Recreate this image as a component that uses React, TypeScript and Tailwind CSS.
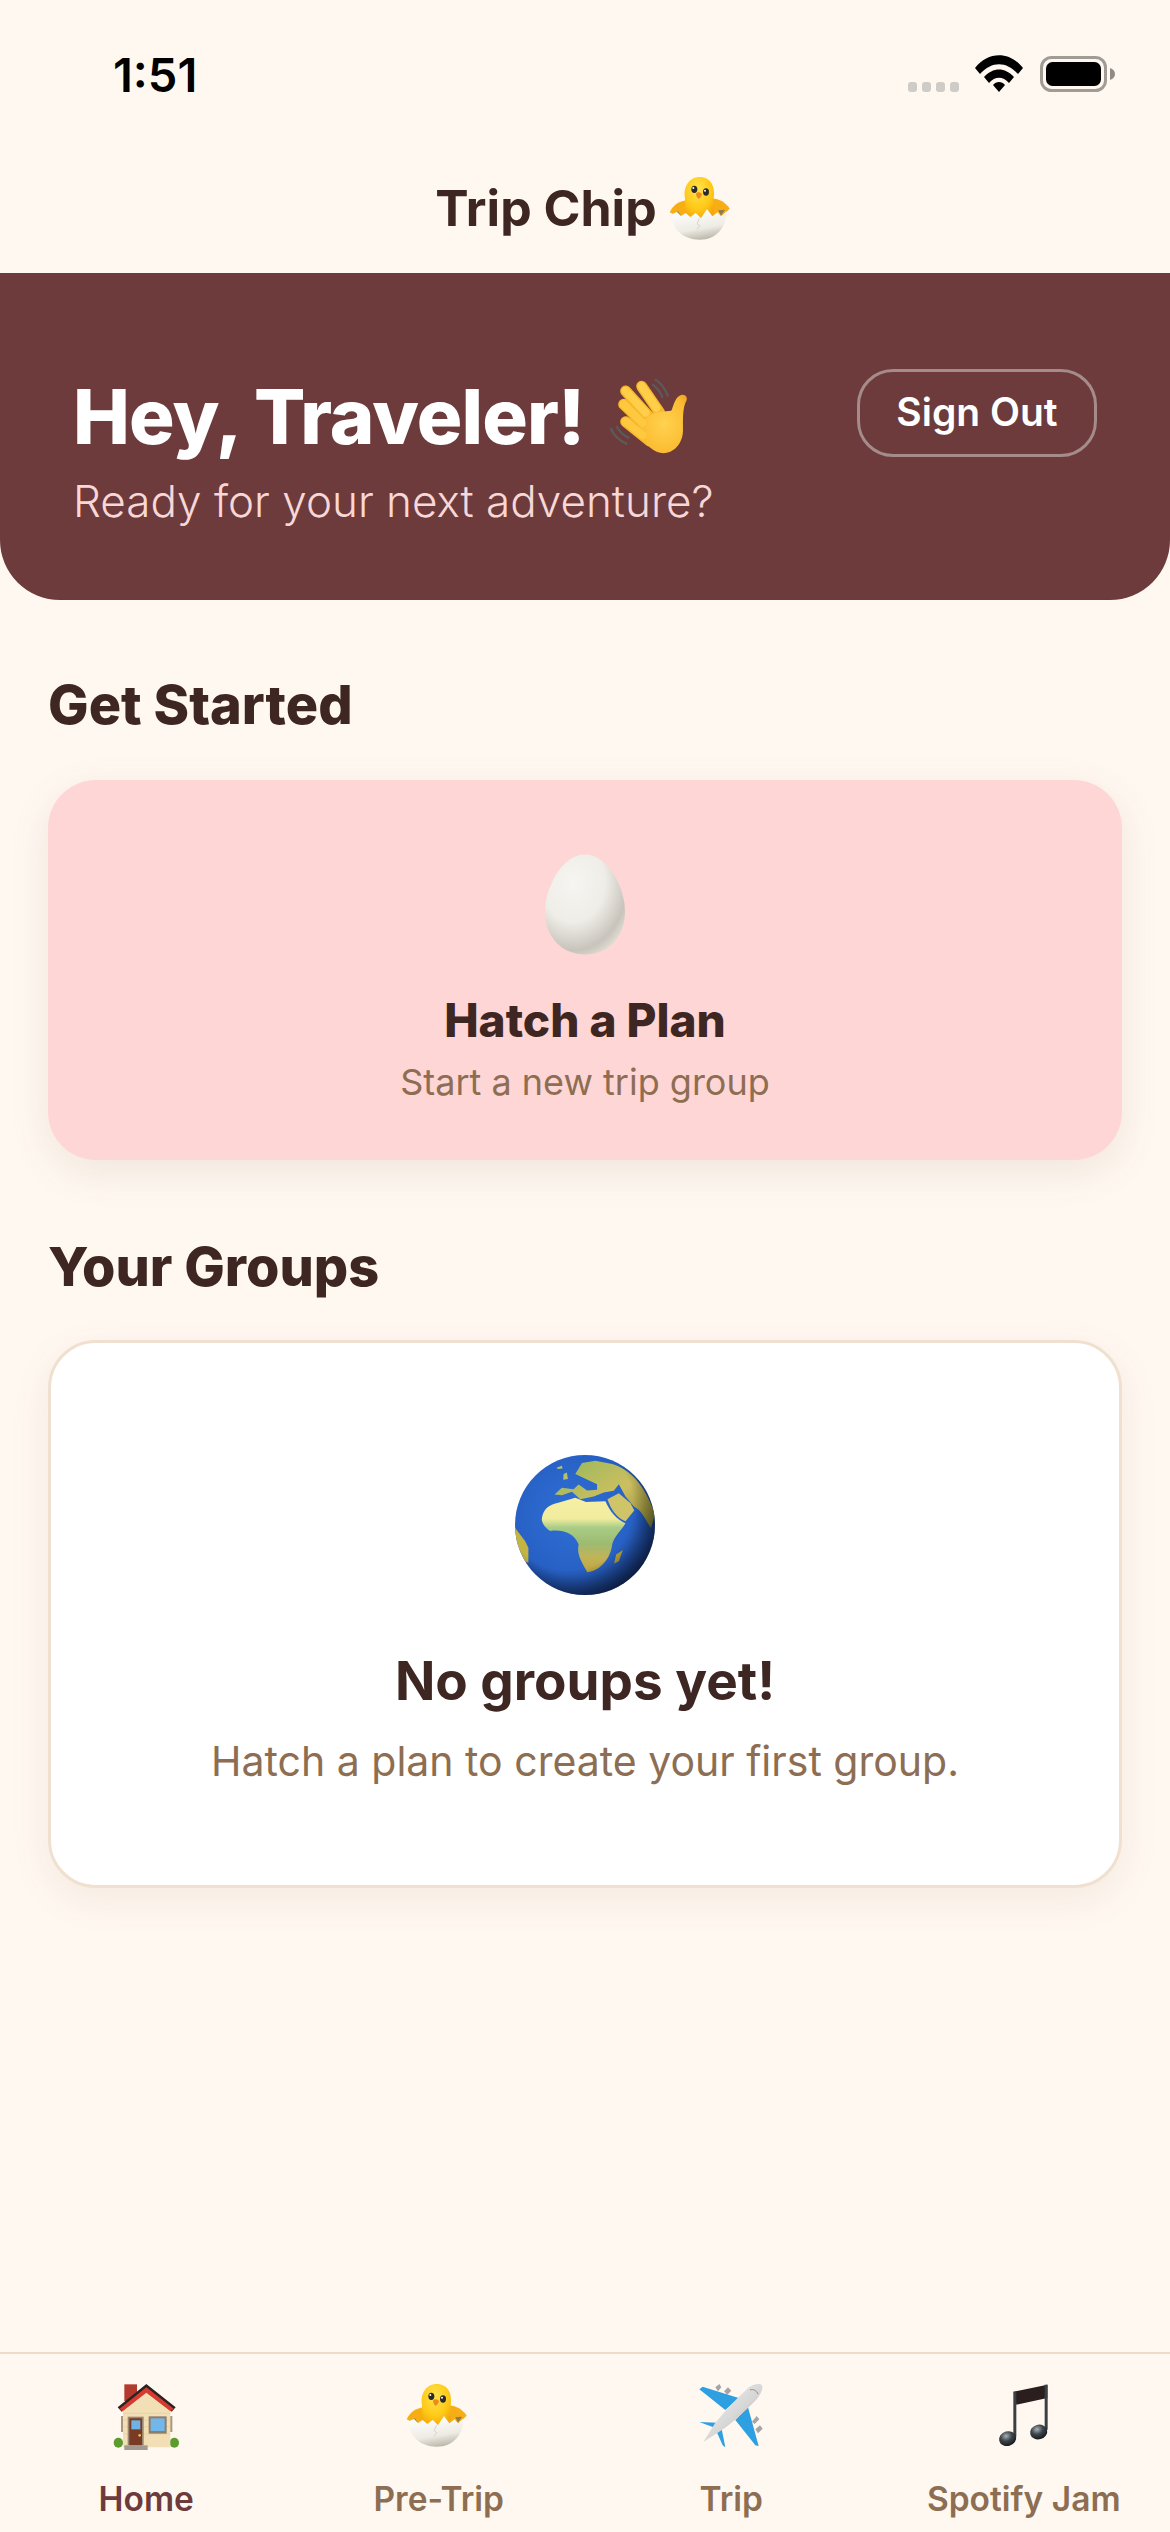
function Wifi() {
  return (
    <svg width="48" height="37" viewBox="0 0 48 37">
      <path d="M0 13 C13 -4 35 -4 48 13 L43 19 C31 6 17 6 5 19 Z" fill="#000" />
      <path d="M9 22 C18 12 30 12 39 22 L34 28 C28 21 20 21 14 28 Z" fill="#000" />
      <path d="M18 30 C21 26 27 26 30 30 L24 37 Z" fill="#000" />
    </svg>
  );
}

function Battery() {
  return (
    <svg width="75" height="36" viewBox="0 0 75 36">
      <rect x="1.5" y="1.5" width="64" height="33" rx="10" fill="none" stroke="#A09B95" strokeWidth="3" />
      <rect x="6" y="6" width="55" height="24" rx="6.5" fill="#000" />
      <path d="M70 12 C73 13 75 15 75 18 C75 21 73 23 70 24 Z" fill="#8F8A85" />
    </svg>
  );
}

function Chick() {
  return (
    <svg width="90" height="80" viewBox="0 0 270 240">
      <defs>
        <radialGradient id="chickBody" cx="45%" cy="30%" r="70%">
          <stop offset="0%" stopColor="#FFE34D" />
          <stop offset="65%" stopColor="#FFC917" />
          <stop offset="100%" stopColor="#F4A80C" />
        </radialGradient>
        <linearGradient id="chickShell" x1="0.3" y1="0" x2="0.6" y2="1">
          <stop offset="0%" stopColor="#FFFFFF" />
          <stop offset="65%" stopColor="#EDEBE3" />
          <stop offset="100%" stopColor="#B9B6A8" />
        </linearGradient>
      </defs>
      <path d="M38 148 C48 126 66 114 90 112 L95 165 L60 160 Z" fill="#F7AE14" />
      <path d="M218 137 C205 118 188 108 165 106 L165 165 L195 160 Z" fill="#F7AE14" />
      <path d="M128 42 C162 42 176 72 170 108 C172 130 172 150 170 170 L86 170 C82 140 84 120 84 105 C78 72 96 42 128 42 Z" fill="url(#chickBody)" />
      <ellipse cx="112" cy="79" rx="9" ry="11" fill="#2B2B2B" />
      <ellipse cx="147" cy="87" rx="9" ry="11" fill="#2B2B2B" />
      <circle cx="109" cy="75" r="3" fill="#fff" />
      <circle cx="144" cy="83" r="3" fill="#fff" />
      <path d="M117 92 C122 85 132 87 135 94 C133 101 129 106 125 108 C121 104 117 99 117 92 Z" fill="#F08A1D" />
      <path d="M62 143 L72 158 L58 160 Z M184 142 L204 140 L192 158 Z" fill="#8F7A55" />
      <path d="M46 153 L60 147 L72 159 L86 150 L100 162 L116 150 L132 165 L150 138 L166 160 L182 148 L192 160 L207 146 C210 190 180 230 128 230 C76 230 42 195 46 153 Z" fill="url(#chickShell)" />
      <path d="M128 165 L120 182 L128 188 L120 200" fill="none" stroke="#C9C6BA" strokeWidth="2" />
    </svg>
  );
}

function Hand() {
  return (
    <svg width="100" height="90" viewBox="0 0 300 270">
      <defs>
        <radialGradient id="handFill" cx="55%" cy="50%" r="70%">
          <stop offset="0%" stopColor="#FFD24F" />
          <stop offset="70%" stopColor="#FBBC32" />
          <stop offset="100%" stopColor="#EE9A1A" />
        </radialGradient>
      </defs>
      <g fill="none" stroke="#5C5A58" strokeWidth="7" strokeLinecap="round">
        <path d="M158 26 C172 36 186 50 194 74" />
        <path d="M150 42 C162 50 172 62 178 78" />
        <path d="M24 174 C32 192 48 208 70 218" />
        <path d="M42 168 C50 182 62 194 76 200" />
      </g>
      <path d="M68 60 L150 150 M116 46 L170 125 M62 100 L135 170 M68 152 L140 210" stroke="#F9B82C" strokeWidth="33" strokeLinecap="round" />
      <path d="M120 150 C150 115 190 125 206 118 C212 100 218 76 236 71 C250 70 254 80 250 90 C238 110 240 150 240 180 C238 225 205 250 175 246 C140 240 120 205 100 185 Z" fill="url(#handFill)" />
      <path d="M68 60 L128 125 M116 46 L160 110" stroke="#FFCF4A" strokeWidth="24" strokeLinecap="round" />
      <path d="M62 100 L118 155 M68 152 L118 192" stroke="#FFC93F" strokeWidth="24" strokeLinecap="round" />
    </svg>
  );
}

function Egg() {
  return (
    <svg width="80" height="101" viewBox="0 0 80 101">
      <defs>
        <radialGradient id="eggFill" cx="35%" cy="28%" r="80%">
          <stop offset="0%" stopColor="#F7F5F1" />
          <stop offset="50%" stopColor="#EFEDE7" />
          <stop offset="85%" stopColor="#C8C4BC" />
          <stop offset="100%" stopColor="#E2DFD6" />
        </radialGradient>
      </defs>
      <path d="M40 0.5 C62 0.5 80 32 80 58 C80 84 62 100.5 40 100.5 C18 100.5 0 84 0 58 C0 32 18 0.5 40 0.5 Z" fill="url(#eggFill)" />
    </svg>
  );
}

function Globe() {
  return (
    <svg width="140" height="140" viewBox="160 108 418 418">
      <defs>
        <radialGradient id="ocean" cx="42%" cy="42%" r="62%">
          <stop offset="0%" stopColor="#2F6FD6" />
          <stop offset="72%" stopColor="#2760C4" />
          <stop offset="100%" stopColor="#1A3F8E" />
        </radialGradient>
        <linearGradient id="africaLand" x1="0" y1="0" x2="0" y2="1">
          <stop offset="0%" stopColor="#F6EFA4" />
          <stop offset="28%" stopColor="#F2EC9E" />
          <stop offset="40%" stopColor="#A8CC86" />
          <stop offset="62%" stopColor="#9DBB70" />
          <stop offset="80%" stopColor="#C2B358" />
          <stop offset="100%" stopColor="#C0A53E" />
        </linearGradient>
        <linearGradient id="asiaLand" x1="0" y1="0" x2="1" y2="1">
          <stop offset="0%" stopColor="#93B85C" />
          <stop offset="55%" stopColor="#CDBF60" />
          <stop offset="100%" stopColor="#8A8530" />
        </linearGradient>
        <radialGradient id="globeShade" cx="38%" cy="36%" r="68%">
          <stop offset="68%" stopColor="#000" stopOpacity="0" />
          <stop offset="100%" stopColor="#000" stopOpacity="0.55" />
        </radialGradient>
        <clipPath id="globeClip">
          <circle cx="369" cy="317" r="209" />
        </clipPath>
      </defs>
      <circle cx="369" cy="317" r="209" fill="url(#ocean)" />
      <g clipPath="url(#globeClip)">
        <path d="M240 298 C244 272 258 256 292 250 L340 236 L372 248 L430 246 C442 275 465 302 490 312 C476 335 456 350 450 376 C446 412 420 452 376 458 C356 424 344 402 350 375 C336 340 300 330 265 335 C250 325 240 312 240 298 Z" fill="url(#africaLand)" />
        <path d="M436 240 L470 222 L505 252 L516 274 L490 306 C462 296 446 268 436 240 Z" fill="#CFC468" />
        <path d="M278 226 L300 206 L335 210 L350 196 L375 214 L405 212 L405 195 L340 165 L360 132 L400 125 L450 135 C500 150 545 190 578 285 L566 326 C548 300 540 275 515 262 L490 232 L470 195 L455 215 L425 220 L395 232 L355 240 L330 218 L300 228 Z" fill="url(#asiaLand)" />
        <path d="M284 146 L300 140 L302 148 L288 150 Z M305 165 L315 160 L318 180 L304 182 Z" fill="#B6C26A" />
        <path d="M160 325 L190 365 L200 385 L200 430 L170 420 L160 380 Z" fill="#C4B446" />
        <path d="M482 392 L470 425 L456 432 L462 405 Z" fill="#B9A53E" />
      </g>
      <circle cx="369" cy="317" r="209" fill="url(#globeShade)" />
    </svg>
  );
}

function House() {
  return (
    <svg width="90" height="80" viewBox="0 0 270 240">
      <rect x="70" y="43" width="38" height="50" fill="#B23A2E" />
      <ellipse cx="52" cy="218" rx="14" ry="15" fill="#5E9B2E" />
      <ellipse cx="220" cy="218" rx="14" ry="15" fill="#5E9B2E" />
      <rect x="60" y="138" width="8" height="48" fill="#A9987F" />
      <rect x="206" y="138" width="8" height="48" fill="#A9987F" />
      <path d="M66 118 L136 62 L208 118 L208 232 L66 232 Z" fill="#F3DFB6" />
      <path d="M66 150 H208 M66 170 H208 M66 192 H208 M66 130 H208" stroke="#E4CDA0" strokeWidth="2" />
      <path d="M50 112 L136 42 L224 112 L212 125 L136 66 L62 125 Z" fill="#2B2320" />
      <path d="M56 116 L136 52 L218 116 L209 124 L136 68 L64 124 Z" fill="#D93A2F" />
      <rect x="80" y="140" width="48" height="86" fill="#9A8671" />
      <rect x="85" y="145" width="38" height="81" fill="#7A3B24" />
      <rect x="91" y="151" width="27" height="27" fill="#6FB3E6" />
      <circle cx="116" cy="196" r="4" fill="#F0C232" />
      <rect x="143" y="139" width="54" height="52" fill="#8F7D6B" />
      <rect x="149" y="145" width="42" height="38" fill="#72B6EA" />
      <rect x="70" y="226" width="70" height="14" fill="#A09A90" />
    </svg>
  );
}

function Plane() {
  return (
    <svg width="90" height="80" viewBox="0 0 270 240">
      <defs>
        <linearGradient id="planeBody" x1="0" y1="0" x2="1" y2="1">
          <stop offset="0%" stopColor="#F4F4F4" />
          <stop offset="55%" stopColor="#D6D6D6" />
          <stop offset="100%" stopColor="#8E8E8E" />
        </linearGradient>
      </defs>
      <path d="M88 52 L100 42 L106 52 L96 64 Z M114 64 L126 52 L136 62 L124 74 Z" fill="#A5A5A5" />
      <path d="M198 155 L212 138 L220 148 L206 162 Z M208 178 L222 166 L230 176 L216 190 Z" fill="#A5A5A5" />
      <path d="M40 58 L50 50 L158 84 L118 120 Z" fill="#2E9FE0" />
      <path d="M218 228 L208 226 L148 150 L186 112 Z" fill="#2E9FE0" />
      <path d="M40 156 L96 158 L82 172 Z M86 172 L104 162 L118 232 L110 226 Z" fill="#2E9FE0" />
      <path d="M52 216 L88 158 C118 122 150 88 186 54 C200 42 222 38 228 46 C232 58 222 78 208 92 C176 124 140 158 102 184 Z" fill="url(#planeBody)" />
      <path d="M192 60 C202 56 212 62 216 72" fill="none" stroke="#8C8C8C" strokeWidth="3" />
    </svg>
  );
}

function Notes() {
  return (
    <svg width="90" height="80" viewBox="0 0 270 240">
      <defs>
        <radialGradient id="noteHead" cx="45%" cy="30%" r="75%">
          <stop offset="0%" stopColor="#A9B2B8" />
          <stop offset="45%" stopColor="#3D454B" />
          <stop offset="100%" stopColor="#101214" />
        </radialGradient>
      </defs>
      <path d="M104 65 L205 44 L205 84 L112 104 Z" fill="#2A1E1E" />
      <rect x="103" y="65" width="9" height="135" fill="#3A3F45" />
      <rect x="197" y="44" width="9" height="135" fill="#3A3F45" />
      <ellipse cx="86" cy="206" rx="26" ry="22" transform="rotate(-15 86 206)" fill="url(#noteHead)" />
      <ellipse cx="179" cy="186" rx="26" ry="22" transform="rotate(-15 179 186)" fill="url(#noteHead)" />
    </svg>
  );
}

const tabs = [
  { label: "Home", icon: <House />, active: true },
  { label: "Pre-Trip", icon: <Chick />, active: false },
  { label: "Trip", icon: <Plane />, active: false },
  { label: "Spotify Jam", icon: <Notes />, active: false },
];

export default function App() {
  return (
    <div className="flex h-[2532px] w-[1170px] flex-col overflow-hidden bg-[#FFF8F1] font-['Inter',sans-serif] text-[#3E2723]">
      {/* Status bar */}
      <div className="flex h-[150px] items-start justify-between pl-[113px] pr-[55px] pt-[45px]">
        <span className="text-[47px] font-semibold leading-[60px] text-black">1:51</span>
        <div className="flex items-end pt-[10px]">
          <div className="mr-[16px] flex gap-[5px]">
            <div className="h-[10px] w-[9px] rounded-[3px] bg-[#CFCBC6]" />
            <div className="h-[10px] w-[9px] rounded-[3px] bg-[#CFCBC6]" />
            <div className="h-[10px] w-[9px] rounded-[3px] bg-[#CFCBC6]" />
            <div className="h-[10px] w-[9px] rounded-[3px] bg-[#CFCBC6]" />
          </div>
          <Wifi />
          <div className="ml-[17px]">
            <Battery />
          </div>
        </div>
      </div>

      {/* Title */}
      <div className="flex h-[123px] items-center justify-center gap-[12px] pb-[8px]">
        <span className="text-[50px] font-bold leading-none">Trip Chip</span>
        <div className="-mx-[12px] -mt-[10px]">
          <Chick />
        </div>
      </div>

      {/* Banner */}
      <div className="flex h-[327px] items-center justify-between rounded-b-[60px] bg-[#6D3B3B] px-[73px]">
        <div className="mt-[24px] flex flex-col">
          <div className="flex items-center gap-[19px]">
            <span className="text-[76px] font-extrabold leading-[95px] tracking-[-0.9px] text-white">Hey, Traveler!</span>
            <div className="-my-[10px]">
              <Hand />
            </div>
          </div>
          <span className="mt-[10px] text-[44px] font-light leading-[55px] text-[#F8D7D7]">Ready for your next adventure?</span>
        </div>
        <button className="mb-[48px] flex h-[88px] w-[240px] items-center justify-center rounded-[36px] border-[3px] border-[#A68B8B] text-[39px] font-semibold text-white">
          Sign Out
        </button>
      </div>

      {/* Content */}
      <div className="flex flex-1 flex-col px-[48px]">
        <h2 className="mt-[70px] text-[54px] font-extrabold leading-[70px]">Get Started</h2>
        <div className="mt-[40px] flex h-[380px] flex-col items-center rounded-[48px] bg-[#FFD6D6] pt-[74px] shadow-[0_12px_40px_rgba(110,70,40,0.1)]">
          <Egg />
          <span className="mt-[35px] text-[46px] font-extrabold leading-[60px]">Hatch a Plan</span>
          <span className="mt-[7px] text-[36px] leading-[50px] text-[#8D6E53]">Start a new trip group</span>
        </div>

        <h2 className="mt-[72px] text-[54px] font-extrabold leading-[70px]">Your Groups</h2>
        <div className="mt-[38px] flex h-[548px] flex-col items-center rounded-[48px] border-[3px] border-[#F0E0CF] bg-white pt-[112px] shadow-[0_12px_40px_rgba(110,70,40,0.08)]">
          <Globe />
          <span className="mt-[51px] text-[53px] font-bold leading-[70px]">No groups yet!</span>
          <span className="mt-[18px] text-[41px] leading-[55px] text-[#8D6E53]">Hatch a plan to create your first group.</span>
        </div>
      </div>

      {/* Tab bar */}
      <div className="grid h-[180px] grid-cols-4 border-t-[2px] border-[#EEDCCB] bg-[#FFF8F1]">
        {tabs.map((tab) => (
          <div key={tab.label} className="flex flex-col items-center pt-[16px]">
            {tab.icon}
            <span className={tab.active ? "mt-[27px] text-[33.5px] font-semibold leading-[44px] text-[#6D3B3B]" : "mt-[27px] text-[33.5px] font-semibold leading-[44px] text-[#8D6E53]"}>
              {tab.label}
            </span>
          </div>
        ))}
      </div>
    </div>
  );
}
